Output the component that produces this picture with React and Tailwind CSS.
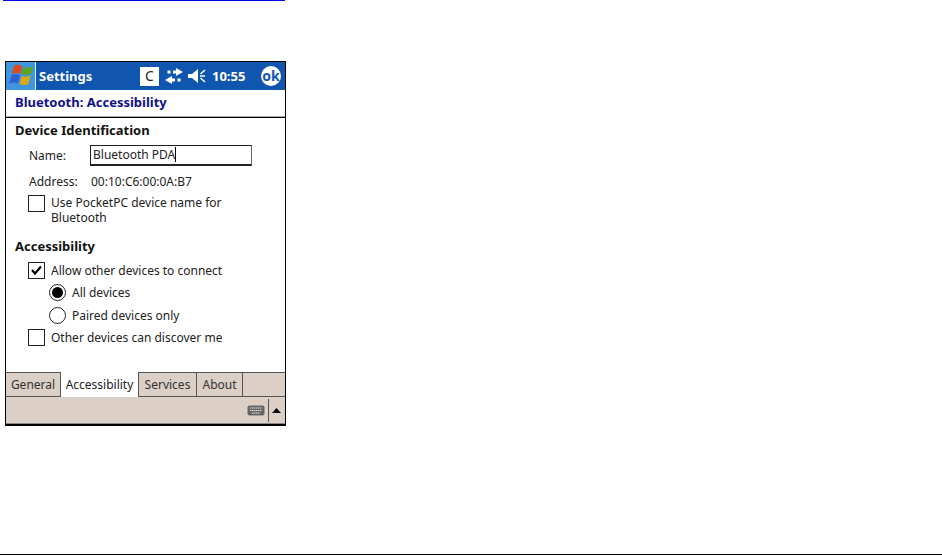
import React from 'react';

const font = { fontFamily: '"Noto Sans", sans-serif' };

const WinLogo = () => (
  <svg width="26" height="24" viewBox="0 0 26 24">
    <path d="M6 1.500 Q10 0 14 2 L12.500 10 Q8.500 8 4 10 Z" fill="#e0491c" />
    <path d="M15.500 3 Q20 4.500 25 2.500 L23 10 Q18 11.500 13.500 10 Z" fill="#5fa41c" />
    <path d="M3.500 11 Q8 9.500 12 11.500 L10 19.500 Q6 17.500 1 20 Z" fill="#2f5fd8" />
    <path d="M13.500 12 Q18 13.500 22.500 11.500 L20.500 20 Q16 22 11.500 20 Z" fill="#e0a80f" />
  </svg>
);

const SyncIcon = () => (
  <svg width="18" height="16" viewBox="0 0 18 16" fill="#fff">
    <path d="M11 0 L18 4 L11 8 V5.500 H8 V2.500 H11 Z" />
    <rect x="2.500" y="2.500" width="3" height="3" />
    <path d="M7 8 L0 12 L7 16 V13.500 H10 V10.500 H7 Z" />
    <rect x="12.500" y="10.500" width="3" height="3" />
  </svg>
);

const SpeakerIcon = () => (
  <svg width="18" height="16" viewBox="0 0 18 16">
    <path d="M0 6 H4 L10 1 V15 L4 10 H0 Z" fill="#fff" />
    <path d="M17 2 L12.500 6 M12 8 H17 M12.500 10 L17 14" stroke="#fff" strokeWidth="1.500" fill="none" />
  </svg>
);

const Check = ({ checked }) => (
  <span className="w-[17px] h-[17px] shrink-0 border border-[#222] flex items-center justify-center">
    {checked && (
      <svg width="13" height="11" viewBox="0 0 13 11">
        <path d="M2 5 L5 8.500 L11 1.500" stroke="#000" strokeWidth="2.200" fill="none" />
      </svg>
    )}
  </span>
);

const Radio = ({ checked }) => (
  <span className="w-[17px] h-[17px] shrink-0 rounded-full border border-[#222] flex items-center justify-center">
    {checked && <span className="w-[11px] h-[11px] rounded-full bg-black" />}
  </span>
);

const Tab = ({ label, active, w }) => (
  <div
    className={`${w} h-[25px] flex items-center justify-center border-r border-[#555] text-[12px] ${
      active ? 'bg-white text-[#222]' : 'border-t border-t-[#555] border-b border-b-[#555] text-[#333]'
    }`}
  >
    {label}
  </div>
);

export default function App() {
  return (
    <div className="h-[556px] w-[942px] bg-white flex flex-col overflow-hidden" style={font}>
      <div className="ml-[3px] w-[282px] h-px bg-[#0000ee]" />

      <div className="ml-[5px] mt-[60px] w-[281px] h-[365px] border border-black border-b-2 flex flex-col text-[#222]">
        {/* title bar */}
        <div className="h-[28px] bg-[#1056b0] flex items-center text-white shrink-0">
          <div className="w-[30px] h-full bg-[#3d96de] border-r border-[#dfeefb] flex items-center justify-center">
            <WinLogo />
          </div>
          <span className="ml-[3px] w-[54px] text-[13px] font-bold leading-none">Settings</span>
          <span className="ml-[47px] w-[19px] h-[19px] bg-white text-[#222] text-[14px] leading-none flex items-center justify-center">
            C
          </span>
          <span className="ml-[6px] flex"><SyncIcon /></span>
          <span className="ml-[5px] flex"><SpeakerIcon /></span>
          <span className="ml-[6px] w-[36px] text-[13px] font-bold leading-none">10:55</span>
          <span className="ml-[13px] w-[20px] h-[20px] rounded-full bg-white text-[#1056b0] text-[14px] font-bold leading-none flex items-center justify-center">
            ok
          </span>
        </div>

        {/* sub header */}
        <div className="h-[28px] border-b border-b-black shrink-0">
          <div className="h-[27px] border-b border-b-[#aaa] flex items-center pl-[9px] text-[13px] font-bold text-[#10108c]">
            Bluetooth: Accessibility
          </div>
        </div>

        {/* body */}
        <div className="flex-1 pl-[9px] text-[12px] leading-[15px]">
          <div className="mt-[5px] text-[13px] font-bold text-[#111]">Device Identification</div>
          <div className="mt-[6px] ml-[14px] flex items-center h-[22px]">
            <span className="w-[61px]">Name:</span>
            <span className="w-[162px] h-[21px] border border-[#222] border-r-[#666] border-b-2 flex items-center pl-[2px]">
              Bluetooth PDA
              <span className="w-px h-[15px] bg-black" />
            </span>
          </div>
          <div className="mt-[8px] ml-[14px] flex">
            <span className="w-[62px]">Address:</span>
            <span>00:10:C6:00:0A:B7</span>
          </div>
          <div className="mt-[6px] ml-[13px] flex gap-[6px]">
            <Check />
            <span>
              Use PocketPC device name for
              <br />
              Bluetooth
            </span>
          </div>
          <div className="mt-[14px] text-[13px] font-bold text-[#111]">Accessibility</div>
          <div className="mt-[8px] ml-[13px] flex items-center gap-[6px]">
            <Check checked />
            <span>Allow other devices to connect</span>
          </div>
          <div className="mt-[5px] ml-[34px] flex items-center gap-[6px]">
            <Radio checked />
            <span>All devices</span>
          </div>
          <div className="mt-[6px] ml-[34px] flex items-center gap-[6px]">
            <Radio />
            <span>Paired devices only</span>
          </div>
          <div className="mt-[5px] ml-[13px] flex items-center gap-[6px]">
            <Check />
            <span>Other devices can discover me</span>
          </div>
        </div>

        {/* tabs */}
        <div className="flex bg-[#dccfc5] shrink-0">
          <Tab label="General" w="w-[55px]" />
          <Tab label="Accessibility" active w="w-[78px]" />
          <Tab label="Services" w="w-[58px]" />
          <Tab label="About" w="w-[46px]" />
          <div className="flex-1 border-t border-t-[#555] border-b border-b-[#555]" />
        </div>

        {/* menu bar */}
        <div className="h-[27px] bg-[#dccfc5] border-b border-b-[#888] flex items-center justify-end shrink-0">
          <svg width="18" height="11" viewBox="0 0 18 11" className="mr-[3px]">
            <rect x="0.500" y="0.500" width="17" height="10" rx="2" fill="#666" />
            <path d="M3 3 H15 M3 5.500 H15 M5 8 H13" stroke="#ddd" strokeWidth="1" strokeDasharray="1.500 0.500" />
          </svg>
          <div className="w-px h-[23px] bg-[#555] mr-[3px]" />
          <svg width="9" height="5" viewBox="0 0 9 5" className="mr-[4px]">
            <path d="M4.500 0 L9 5 H0 Z" fill="#000" />
          </svg>
        </div>
      </div>

      <div className="mt-auto mb-px h-px bg-black" />
    </div>
  );
}
